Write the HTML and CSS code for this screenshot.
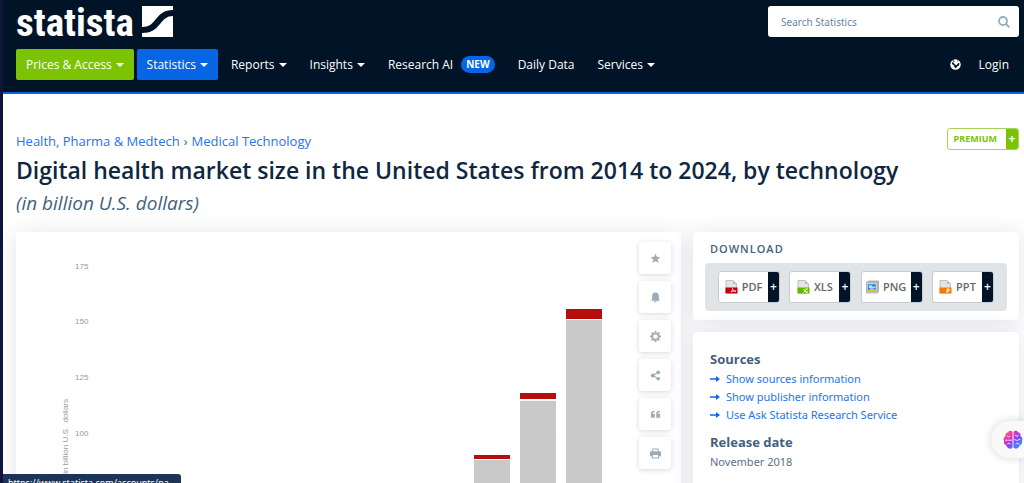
FILE: index.html
```html
<!DOCTYPE html>
<html lang="en">
<head>
<meta charset="utf-8">
<title>Digital health market size in the United States</title>
<link rel="stylesheet" href="styles.css">
</head>
<body>
<header class="header">
  <div class="header-top">
    <a class="logo" href="#" aria-label="statista">
      <span class="logo-word">statista</span>
      <svg class="logo-mark" viewBox="0 0 31 31" aria-hidden="true"><path fill="#fff" d="M0 0H31V4C22 4 18 8 14 13C10 18 7 21 0 21ZM31 10V31H0V27C9 27 13 24 18 18C22 13 25 10 31 10Z"/></svg>
    </a>
    <form class="search">
      <input class="search-input" type="search" placeholder="Search Statistics" aria-label="Search Statistics">
      <button class="search-button" type="button" aria-label="Search"><svg viewBox="0 0 12 12" width="12" height="12" fill="none" stroke="#8fb0bd" stroke-width="1.8"><circle cx="5" cy="5" r="4"/><path d="M8 8l3.400 3.400"/></svg></button>
    </form>
  </div>
  <nav class="nav">
    <a class="nav-item nav-green" href="#">Prices &amp; Access<i class="caret"></i></a>
    <a class="nav-item nav-blue" href="#">Statistics<i class="caret"></i></a>
    <a class="nav-item" href="#">Reports<i class="caret"></i></a>
    <a class="nav-item" href="#">Insights<i class="caret"></i></a>
    <a class="nav-item" href="#">Research AI<span class="new">NEW</span></a>
    <a class="nav-item" href="#">Daily Data</a>
    <a class="nav-item" href="#">Services<i class="caret"></i></a>
    <span class="nav-end">
      <button class="globe" type="button" aria-label="Language"><svg viewBox="0 0 12 12" width="11" height="11"><circle cx="6" cy="6" r="5.700" fill="#fff"/><path fill="#001327" d="M1.800 4.200L3.300 3.600L5.300 6L7 6.800L9.300 4.200L10.400 4.800L9.700 7L7.800 8.300L6.400 10L4.700 8.600L4.500 7.200L2.400 5.800Z"/><path fill="#001327" d="M2.900 1.900L4 1.300L5 2.600L4 3.200ZM8 1.200L9.400 2L8.400 2.700Z"/></svg></button>
      <a class="nav-item" href="#">Login</a>
    </span>
  </nav>
</header>
<main class="page">
  <div class="heading">
    <div class="heading-row">
      <nav class="crumbs"><a href="#">Health, Pharma &amp; Medtech</a><span class="crumb-sep">›</span><a href="#">Medical Technology</a></nav>
      <span class="premium"><span class="premium-label">PREMIUM</span><span class="premium-plus">+</span></span>
    </div>
    <h1 class="title">Digital health market size in the United States from 2014 to 2024, by technology</h1>
    <p class="subtitle">(in billion U.S. dollars)</p>
  </div>
  <div class="columns">
    <section class="card chart-card">
      <svg class="chart" viewBox="0 0 623 300" role="img" aria-label="Market size by year">
        <g stroke="#fbfbfb"><path d="M84 33.500H590M84 89.500H590M84 145.500H590M84 201.500H590M84 257.500H590"/></g>
        <g class="chart-text"><text x="59" y="37">175</text><text x="59" y="92">150</text><text x="59" y="148">125</text><text x="59" y="204">100</text><text text-anchor="end" transform="translate(52 167) rotate(-90)">in billion U.S. &#160;dollars</text></g>
        <g fill="#c9c9c9"><path d="M458 228h36v72h-36zM504 169h36v131h-36zM550 88h36v212h-36z"/></g>
        <g fill="#b60d0d"><path d="M458 223h36v4h-36zM504 161h36v6h-36zM550 77h36v10h-36z"/></g>
      </svg>
      <div class="tools">
        <button class="tool" type="button" aria-label="Favorite"><svg viewBox="0 0 12 12"><path d="M6 .7L7.500 4.200L11.400 4.500L8.400 7L9.400 10.900L6 8.800L2.600 10.900L3.600 7L.6 4.500L4.500 4.200Z"/></svg></button>
        <button class="tool" type="button" aria-label="Notify"><svg viewBox="0 0 12 12"><path d="M6 .5C8.700.5 9.700 2.500 9.700 4.800V7.500L10.700 9.500H1.300L2.300 7.500V4.800C2.300 2.500 3.300.5 6 .5ZM4.500 10.200H7.500C7.300 11.900 4.700 11.900 4.500 10.200Z"/></svg></button>
        <button class="tool" type="button" aria-label="Settings"><svg viewBox="0 0 12 12"><circle cx="6" cy="6" r="3.500" fill="none" stroke="#9dacbb" stroke-width="2"/><path fill="none" stroke="#9dacbb" stroke-width="2" d="M6 0V2M6 10V12M0 6H2M10 6H12M1.800 1.800L3.200 3.200M8.800 8.800L10.200 10.200M1.800 10.200L3.200 8.800M8.800 3.200L10.200 1.800"/></svg></button>
        <button class="tool" type="button" aria-label="Share"><svg viewBox="0 0 12 12"><path fill="none" stroke="#9dacbb" stroke-width="1.300" d="M9 2.500L3 6L9 9.500"/><circle cx="9" cy="2.500" r="2"/><circle cx="3" cy="6" r="2.200"/><circle cx="9" cy="9.500" r="2"/></svg></button>
        <button class="tool" type="button" aria-label="Cite"><svg viewBox="0 0 12 12"><path d="M5 2V3.300C3.500 3.400 3 4.200 3 5.200H5.200V9.500H1V5.500C1 3.300 2.400 2 5 2ZM10.800 2V3.300C9.300 3.400 8.800 4.200 8.800 5.200H11V9.500H6.800V5.500C6.800 3.300 8.200 2 10.800 2Z"/></svg></button>
        <button class="tool" type="button" aria-label="Print"><svg viewBox="0 0 12 12"><path fill-rule="evenodd" d="M2.500.5H9.500V3.500H11Q12 3.500 12 4.500V9H10V11.500H2V9H0V4.500Q0 3.500 1 3.500H2.500ZM3.500 1.500V3.500H8.500V1.500ZM3.200 7.500V10.300H8.800V7.500Z"/></svg></button>
      </div>
    </section>
    <aside class="side">
      <section class="card download">
        <h2 class="download-title">DOWNLOAD</h2>
        <div class="formats">
          <button class="format" type="button"><span class="format-main"><svg viewBox="0 0 12 14"><path fill="#e4e4e4" stroke="#aaa" stroke-width=".7" d="M.5.5H7.500L11 4V13H.5Z"/><path fill="#bbb" d="M7.500.5V4H11Z"/><path fill="#c4000c" d="M0 7.500H12V13.500H0Z"/><path fill="none" stroke="#fff" stroke-width=".8" d="M5.500 12C7 11 7.500 8 7 8.500C7 10.500 9 11.500 10.500 11.200C9 10.600 7 11 5.500 12"/></svg>PDF</span><span class="format-plus">+</span></button>
          <button class="format" type="button"><span class="format-main"><svg viewBox="0 0 12 14"><path fill="#e4e4e4" stroke="#aaa" stroke-width=".7" d="M.5.5H7.500L11 4V13H.5Z"/><path fill="#bbb" d="M7.500.5V4H11Z"/><path fill="#65b800" d="M0 7.500H12V13.500H0Z"/><path fill="none" stroke="#fff" d="M6 9L9.500 12.500M9.500 9L6 12.500M8 9H10.500M8 12H10.500"/></svg>XLS</span><span class="format-plus">+</span></button>
          <button class="format" type="button"><span class="format-main"><svg viewBox="0 0 14 14"><path fill="#b8b8b8" stroke="#888" stroke-width=".6" d="M.5 2.500L2.500.5H13.500V11.500L12 13.500H.5Z"/><path fill="#d9d9d9" d="M1 3H11.500V13H1Z"/><path fill="#1685df" d="M2 4H10.500V12H2Z"/><path fill="#b4e1ff" d="M3 5H6L8 7L10 6V8L6 9L3 8Z"/><path fill="#efbf46" d="M2 10.500L6 9L10.500 10V12H2Z"/></svg>PNG</span><span class="format-plus">+</span></button>
          <button class="format" type="button"><span class="format-main"><svg viewBox="0 0 12 14"><path fill="#e4e4e4" stroke="#aaa" stroke-width=".7" d="M.5.5H7.500L11 4V13H.5Z"/><path fill="#bbb" d="M7.500.5V4H11Z"/><path fill="#f57c00" d="M0 7.500H12V13.500H0Z"/><path fill="none" stroke="#fff" d="M7.500 13V9H9.500V11H7.500"/></svg>PPT</span><span class="format-plus">+</span></button>
        </div>
      </section>
      <section class="card info">
        <h3 class="info-title">Sources</h3>
        <ul class="links">
          <li><a href="#"><svg class="arrow" viewBox="0 0 10 8"><path d="M0 3.200H6V1L10 4L6 7V4.800H0Z"/></svg>Show sources information</a></li>
          <li><a href="#"><svg class="arrow" viewBox="0 0 10 8"><path d="M0 3.200H6V1L10 4L6 7V4.800H0Z"/></svg>Show publisher information</a></li>
          <li><a href="#"><svg class="arrow" viewBox="0 0 10 8"><path d="M0 3.200H6V1L10 4L6 7V4.800H0Z"/></svg>Use Ask Statista Research Service</a></li>
        </ul>
        <h3 class="info-title">Release date</h3>
        <p class="info-text">November 2018</p>
      </section>
    </aside>
  </div>
</main>
<button class="assistant" type="button" aria-label="Assistant">
  <svg viewBox="0 0 20 20" width="20" height="20">
    <defs><linearGradient id="brain" x1="0" y1="0" x2="1" y2="1"><stop offset="0" stop-color="#ff9a3c"/><stop offset=".3" stop-color="#ee2fb4"/><stop offset=".6" stop-color="#7a4df5"/><stop offset="1" stop-color="#12b8ff"/></linearGradient></defs>
    <path fill="url(#brain)" d="M9.500 2C8.500.2 5.500.5 5 2.300C3 2.500 2 4.500 2.600 6C.5 7 0 9.500 1 11C.5 13 1.500 15 3.300 15.500C4 18.500 8 19.800 9.500 17.500ZM10.500 2C11.500.2 14.500.5 15 2.300C17 2.500 18 4.500 17.400 6C19.500 7 20 9.500 19 11C19.500 13 18.500 15 16.700 15.500C16 18.500 12 19.800 10.500 17.500Z"/>
    <path fill="none" stroke="#f9f9fa" stroke-width=".8" d="M2 10.200H9M4 6C5 7.500 7 7 7.500 5.500M4 14.500C5 12.800 7 13 7.500 14.500M12 5L14.500 6.500L15.500 5M11 9.500L14 10.500L17.500 9M12.500 14L15 13L16 14.500"/>
  </svg>
</button>
<div class="status"><span>https://www.statista.com/accounts/pa</span></div>
</body>
</html>
```
FILE: styles.css
```css
* { box-sizing: border-box; }
body {
  margin: 0;
  height: 100vh;
  overflow: hidden;
  border-left: 3px solid #0d1638;
  background: #fff;
  color: #455f7c;
  font: 13px/18px "Open Sans", "Noto Sans", sans-serif;
}
a { color: #2474f2; text-decoration: none; }
button { padding: 0; border: 0; background: none; font: inherit; color: inherit; }
svg { display: block; }
h1, h2, h3, p, ul { margin: 0; padding: 0; }
.header { padding: 6px 5px 12px 13px; background: #001327; border-bottom: 2px solid #0a62dc; }
.header-top { display: flex; justify-content: space-between; height: 32px; }
.logo { display: flex; align-items: flex-start; gap: 8px; color: #fff; }
.logo-word { font: bold 39px/34px "Liberation Sans Narrow", "Roboto Condensed", "Open Sans Condensed", "Liberation Sans", sans-serif; }
.logo-mark { width: 31px; height: 31px; }
.search { display: flex; width: 251px; height: 31px; background: #fff; border-radius: 3px; }
.search-input { flex: 1; min-width: 0; padding: 0 13px; border: 0; background: none; font: 10px "Noto Sans", sans-serif; outline: 0; }
.search-input::placeholder { color: #6b849d; }
.search-button { padding: 0 9px; }
.nav { display: flex; gap: 3px; margin-top: 11px; }
.nav-item { display: flex; align-items: center; height: 31px; padding: 0 10px; border-radius: 2px; color: #fff; font-size: 12px; white-space: nowrap; }
.nav-green { background: #7cc304; }
.nav-blue { background: #0666e5; }
.caret { margin-left: 4px; border: 4px solid transparent; border-top-color: #fff; border-bottom: 0; }
.new { margin-left: 8px; padding: 0 5px; border-radius: 9px; background: #0666e5; font-size: 10px; line-height: 17px; font-weight: 700; }
.nav-end { display: flex; align-items: center; gap: 8px; margin-left: auto; }
.page { padding: 34px 5px 0 13px; }
.heading-row { display: flex; justify-content: space-between; height: 26px; }
.crumbs { padding-top: 4px; }
.crumb-sep { margin: 0 4px; }
.premium { display: flex; height: 22px; border: 1px solid #a5d65a; border-radius: 3px; overflow: hidden; font-size: 9px; line-height: 20px; font-weight: 700; }
.premium-label { padding: 0 9px 0 6px; color: #7cc304; }
.premium-plus { width: 12px; background: #7cc304; color: #fff; font-size: 12px; text-align: center; }
.title { color: #0f2741; font-size: 23px; line-height: 32px; font-weight: 600; }
.subtitle { padding: 4px 0 16px; font-size: 19px; line-height: 26px; font-style: italic; }
.columns { display: grid; grid-template-columns: minmax(0, 1fr) 326px; gap: 12px; }
.card { background: #fff; border-radius: 4px; box-shadow: 0 2px 22px rgba(40, 60, 100, .14); }
.chart-card { display: flex; align-items: flex-start; padding-right: 10px; }
.chart { flex: 1; min-width: 0; }
.chart-text { fill: #999; font: 8px "Liberation Sans", sans-serif; }
.tools { display: grid; gap: 7px; padding-top: 10px; }
.tool { display: grid; place-items: center; width: 32px; height: 32px; border-radius: 3px; background: #fff; box-shadow: 0 1px 5px rgba(40, 60, 100, .2); }
.tool svg { width: 11px; height: 11px; fill: #9dacbb; }
.side { display: grid; gap: 12px; align-content: start; }
.download { padding: 8px 12px 9px; }
.download-title { padding: 0 5px; font-size: 11px; line-height: 18px; font-weight: 600; letter-spacing: 1px; }
.formats { display: flex; justify-content: space-between; margin-top: 5px; padding: 8px 13px; border-radius: 4px; background: #e0e4e7; }
.format { display: flex; width: 62px; height: 32px; border: 1px solid #c5ccd6; border-radius: 3px; overflow: hidden; background: #fff; color: #666; font-size: 11px; font-weight: 600; }
.format-main { display: flex; flex: 1; align-items: center; justify-content: center; gap: 4px; height: 30px; }
.format-main svg { width: 13px; height: 14px; }
.format-plus { width: 11px; background: #001327; color: #fff; font-size: 12px; line-height: 30px; }
.info { padding: 17px; min-height: 180px; }
.info-title { font-size: 13px; line-height: 20px; font-weight: 700; }
.links { margin: 1px 0 8px; list-style: none; font: 11px/18px "Noto Sans", sans-serif; }
.links a { display: flex; align-items: center; gap: 6px; }
.arrow { width: 10px; height: 8px; fill: #0f66ed; }
.info-text { color: #5d728a; font: 11px/20px "Noto Sans", sans-serif; }
.assistant { position: fixed; right: 0; bottom: 25px; width: 33px; height: 37px; padding-left: 12px; border-radius: 19px 0 0 19px; background: #f9f9fa; box-shadow: 0 0 8px rgba(30, 50, 80, .2); }
.status { position: fixed; left: 3px; bottom: 0; height: 9px; padding: 1px 12px 0 5px; border-radius: 0 3px 0 0; overflow: hidden; background: #1c3557; color: #fff; font: 9px/16px "Noto Sans", sans-serif; }
```
